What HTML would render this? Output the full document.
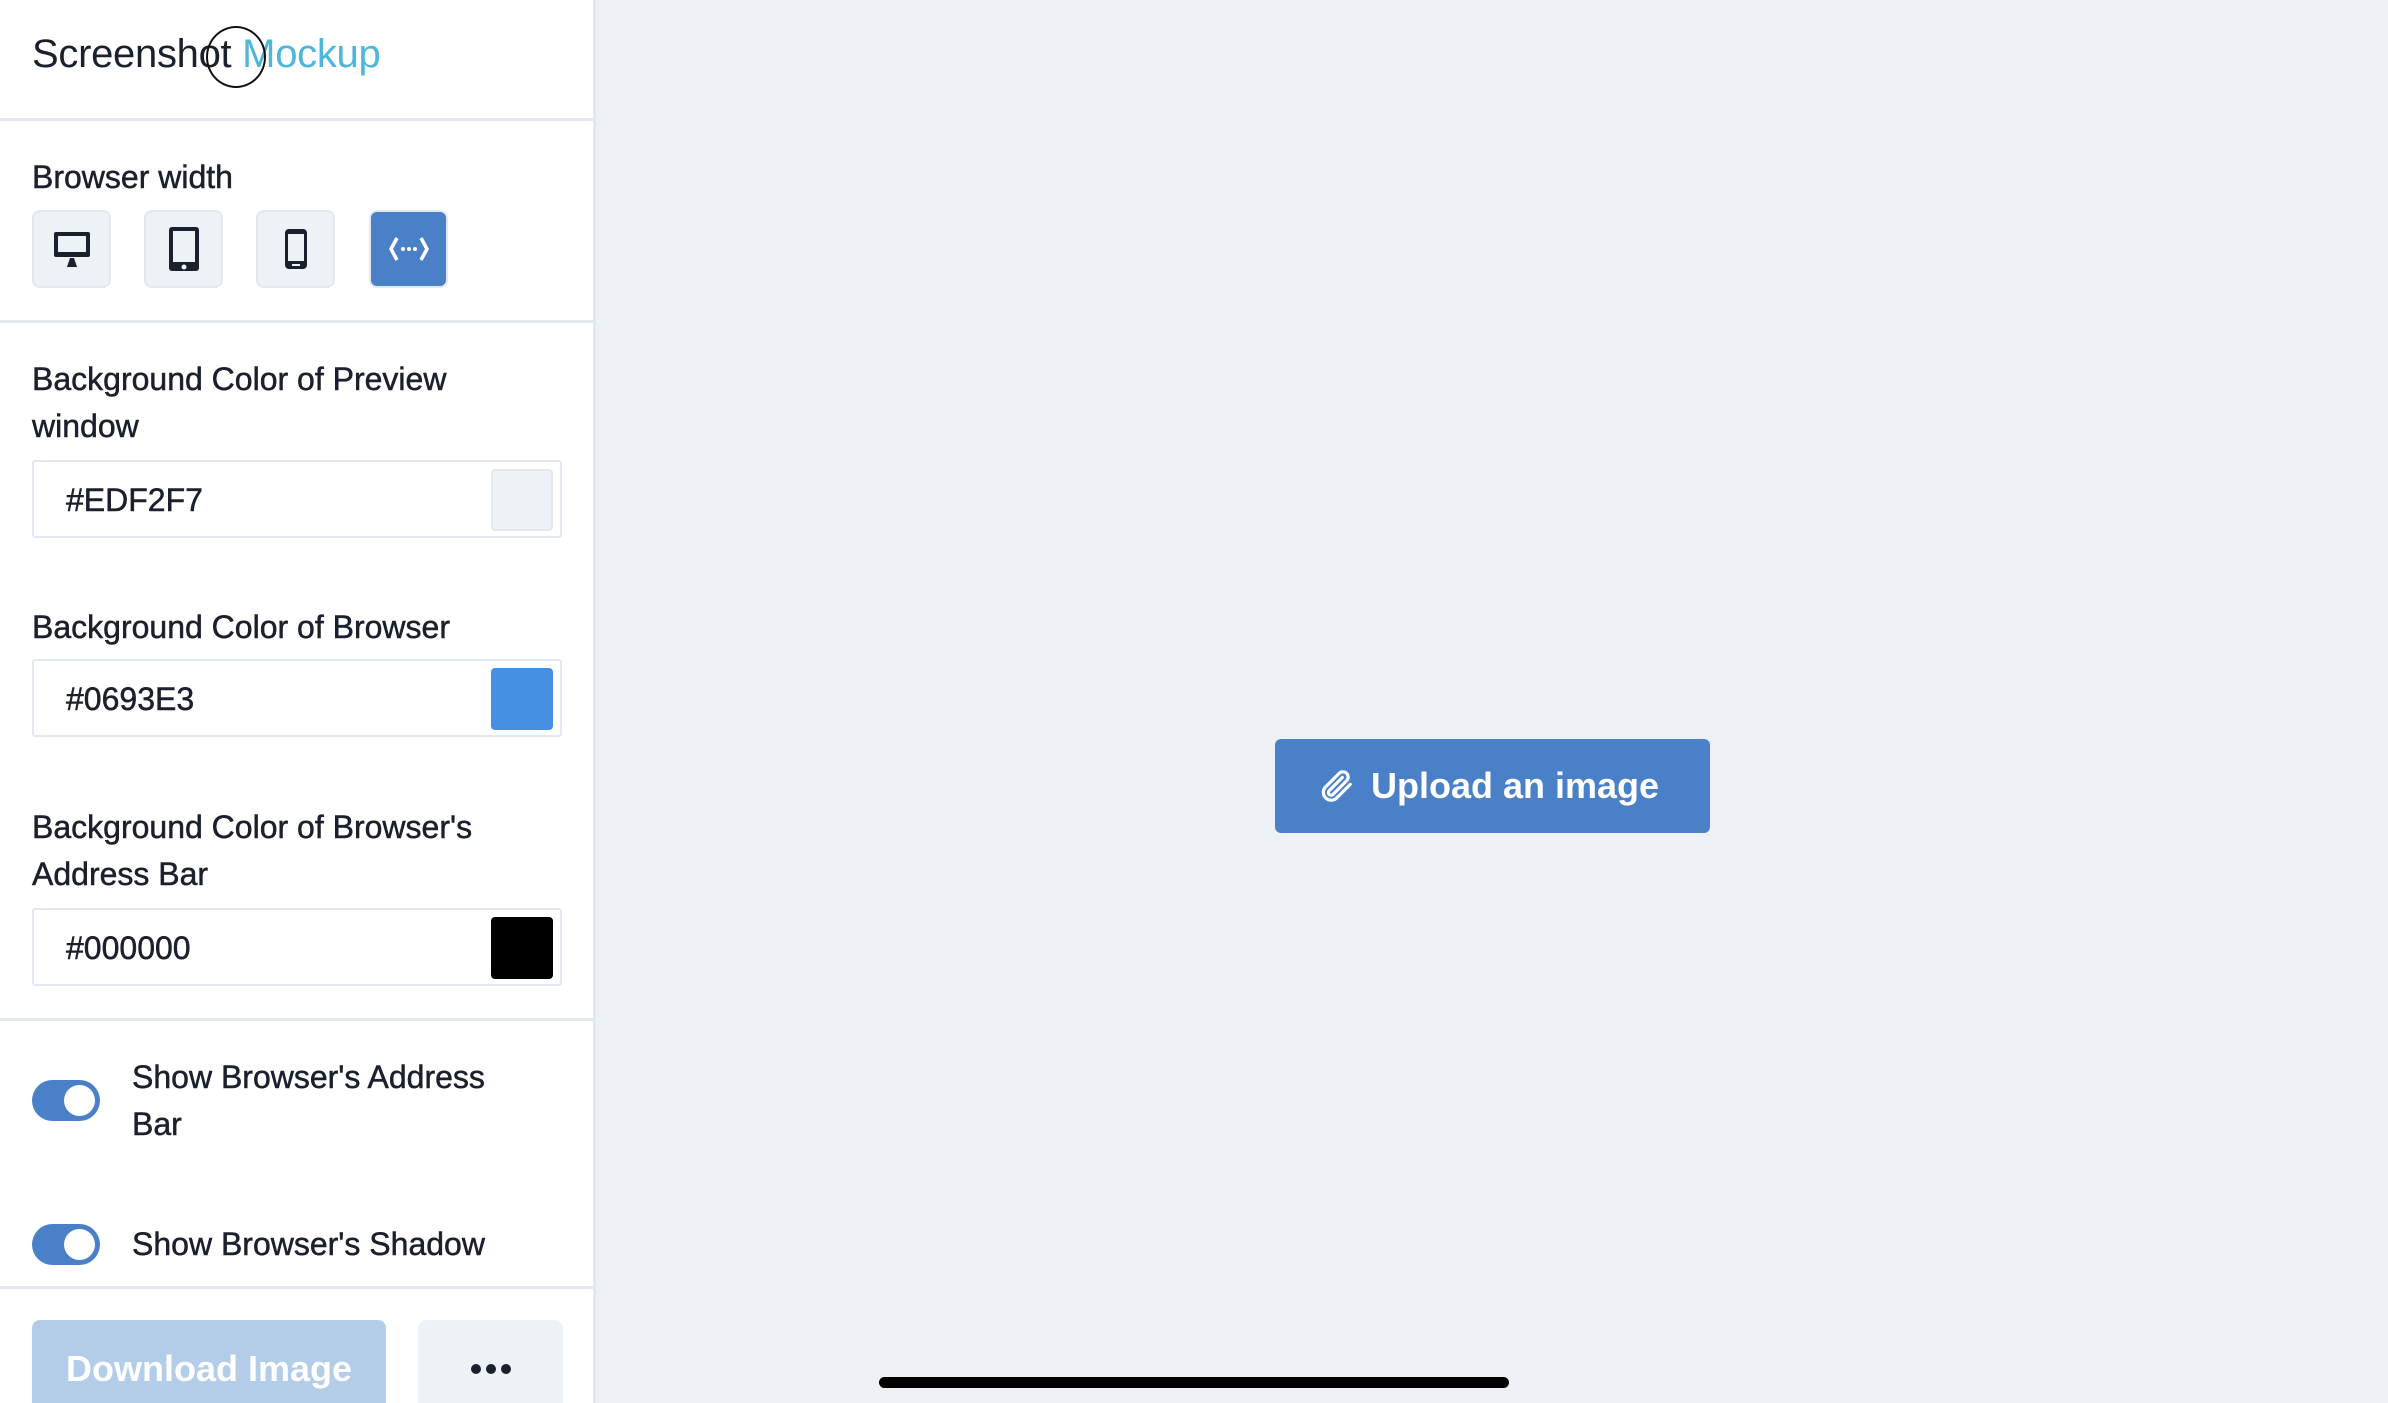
<!DOCTYPE html>
<html><head><meta charset="utf-8"><style>
*{box-sizing:border-box;margin:0;padding:0}
html,body{width:2388px;height:1403px;overflow:hidden}
body{background:#edf0f5;font-family:"Liberation Sans",sans-serif;color:#1a202c;position:relative}
.side{position:absolute;left:0;top:0;width:596px;height:1403px;background:#fff;border-right:3px solid #e2e8f0;overflow:hidden}
.hr{position:absolute;left:0;width:593px;height:3px;background:#e2e8f0}
.t{position:absolute;font-size:32px;line-height:47px;color:#1a202c;-webkit-text-stroke:0.5px #1a202c}
.btn{position:absolute;top:210px;width:79px;height:78px;border-radius:8px;background:#edf2f7;border:2px solid #e2e8f0;display:flex;align-items:center;justify-content:center}
.inp{position:absolute;left:32px;width:530px;height:78px;border:2px solid #e2e8f0;border-radius:3px}
.inp span{position:absolute;left:32px;top:20px;font-size:32px;color:#1a202c;-webkit-text-stroke:0.5px #1a202c}
.sw{position:absolute;right:7px;top:7px;width:62px;height:62px;border-radius:4px}
.tg{position:absolute;left:32px;width:68px;height:41px;border-radius:21px;background:#4a80c8}
.tg:after{content:"";position:absolute;right:5px;top:5px;width:31px;height:31px;border-radius:50%;background:#fff}
</style></head><body>
<div class="side">
<div style="position:absolute;left:32px;top:32px;font-size:40px;letter-spacing:-0.3px">Screenshot <span style="color:#4db6d9">Mockup</span></div>
<div style="position:absolute;left:206px;top:26px;width:60px;height:62px;border:2px solid #111;border-radius:50%"></div>
<div class="hr" style="top:118px"></div>
<div class="t" style="left:32px;top:154px">Browser width</div>
<div class="btn" style="left:32px"><svg width="38" height="36" viewBox="0 0 38 36"><rect x="1" y="1" width="36" height="25" rx="2" fill="#1a202c"/><rect x="5" y="5" width="28" height="16" fill="#edf2f7"/><path d="M14 36 L17 27 H21 L24 36Z" fill="#1a202c"/></svg></div>
<div class="btn" style="left:144px"><svg width="32" height="46" viewBox="0 0 32 46"><rect x="1" y="1" width="30" height="44" rx="3" fill="#1a202c"/><rect x="5" y="5" width="22" height="31" fill="#edf2f7"/><circle cx="16" cy="41" r="2.5" fill="#edf2f7"/></svg></div>
<div class="btn" style="left:256px"><svg width="24" height="42" viewBox="0 0 24 42"><rect x="1" y="1" width="22" height="40" rx="4" fill="#1a202c"/><rect x="4" y="6" width="16" height="27" fill="#edf2f7"/><rect x="8" y="36" width="8" height="2" fill="#edf2f7"/></svg></div>
<div class="btn" style="left:369px;background:#4a80c8;border-color:#e2e8f0"><svg width="40" height="26" viewBox="0 0 40 26"><path d="M8 2 L2 13 L8 24 M32 2 L38 13 L32 24" stroke="#fff" stroke-width="3.5" fill="none"/><circle cx="14" cy="13" r="2" fill="#fff"/><circle cx="20" cy="13" r="2" fill="#fff"/><circle cx="26" cy="13" r="2" fill="#fff"/></svg></div>
<div class="hr" style="top:320px"></div>
<div class="t" style="left:32px;top:356px">Background Color of Preview<br>window</div>
<div class="inp" style="top:460px"><span>#EDF2F7</span><div class="sw" style="background:#edf2f7;border:2px solid #e2e8f0"></div></div>
<div class="t" style="left:32px;top:604px">Background Color of Browser</div>
<div class="inp" style="top:659px"><span>#0693E3</span><div class="sw" style="background:#4590e0"></div></div>
<div class="t" style="left:32px;top:804px">Background Color of Browser's<br>Address Bar</div>
<div class="inp" style="top:908px"><span>#000000</span><div class="sw" style="background:#000"></div></div>
<div class="hr" style="top:1018px"></div>
<div class="tg" style="top:1080px"></div>
<div class="t" style="left:132px;top:1054px">Show Browser's Address<br>Bar</div>
<div class="tg" style="top:1224px"></div>
<div class="t" style="left:132px;top:1221px">Show Browser's Shadow</div>
<div class="hr" style="top:1286px"></div>
<div style="position:absolute;left:32px;top:1320px;width:354px;height:83px;background:#b3cde8;border-radius:8px 8px 0 0;color:#fff;font-weight:bold;font-size:36px;padding:28px 0 0 34px">Download Image</div>
<div style="position:absolute;left:418px;top:1320px;width:145px;height:83px;background:#edf2f7;border-radius:8px 8px 0 0;display:flex;justify-content:center;gap:5px;padding-top:44px">
<i style="width:10px;height:10px;border-radius:50%;background:#1a202c"></i><i style="width:10px;height:10px;border-radius:50%;background:#1a202c"></i><i style="width:10px;height:10px;border-radius:50%;background:#1a202c"></i></div>
</div>
<div style="position:absolute;left:1275px;top:739px;width:435px;height:94px;background:#4a80c8;border-radius:6px;color:#fff;font-weight:bold;font-size:36px;display:flex;align-items:center;padding-left:42px">
<svg width="38" height="38" viewBox="0 0 24 24" style="margin-right:16px"><path d="M21 11 L12 20 a5 5 0 0 1-7-7 L14 4 a3.3 3.3 0 0 1 4.7 4.7 L10 17.4 a1.7 1.7 0 0 1-2.4-2.4 L16 6.6" stroke="#fff" stroke-width="2" fill="none" stroke-linecap="round"/></svg>Upload an image</div>
<div style="position:absolute;left:879px;top:1377px;width:630px;height:11px;border-radius:6px;background:#000"></div>
</body></html>
